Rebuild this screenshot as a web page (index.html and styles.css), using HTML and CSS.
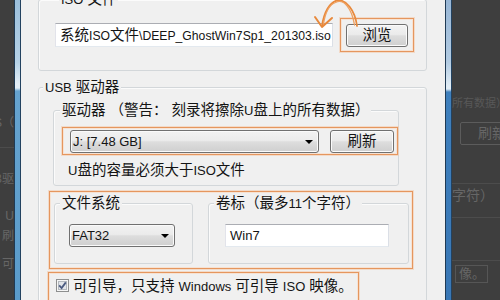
FILE: index.html
```html
<!DOCTYPE html>
<html>
<head>
<meta charset="utf-8">
<link rel="stylesheet" href="styles.css">
</head>
<body>
<div class="screen">
  <div class="ghost ghost-left">
    <div class="g-text gl1">S（</div>
    <div class="g-rule gl2"></div>
    <div class="g-text gl3">B驱</div>
    <div class="g-text gl4">U</div>
    <div class="g-text gl5">刷</div>
    <div class="g-text gl6">可</div>
  </div>
  <div class="frame frame-left"></div>
  <div class="content">
    <div class="group group-iso">
      <div class="group-title"><span class="lat">ISO</span> 文件</div>
      <div class="iso-row">
        <div class="textbox iso-path">系统<span class="lat">ISO</span>文件<span class="lat">\DEEP_GhostWin7Sp1_201303.iso</span></div>
        <div class="mark mark-browse"><div class="btn btn-browse">浏览</div></div>
      </div>
    </div>

    <div class="group group-usb">
      <div class="group-title"><span class="lat">USB</span> 驱动器</div>
      <div class="group group-drive">
        <div class="group-title">驱动器 （警告： 刻录将擦除<span class="lat">U</span>盘上的所有数据）</div>
        <div class="mark mark-drive">
          <div class="combo combo-drive"><span class="lat">J: [7.48 GB]</span><span class="caret"></span></div>
          <div class="btn btn-refresh">刷新</div>
        </div>
        <div class="note"><span class="lat">U</span>盘的容量必须大于<span class="lat">ISO</span>文件</div>
      </div>

      <div class="mark mark-fs">
        <div class="group group-fs">
          <div class="group-title">文件系统</div>
          <div class="combo combo-fs"><span class="lat">FAT32</span><span class="caret"></span></div>
        </div>
        <div class="group group-label">
          <div class="group-title">卷标（最多<span class="lat">11</span>个字符）</div>
          <div class="textbox label-box"><span class="lat">Win7</span></div>
        </div>
      </div>

      <div class="mark mark-check">
        <svg class="checkbox" width="13" height="13" viewBox="0 0 13 13">
          <rect x="0.5" y="0.5" width="12" height="12" fill="#f6f6f6" stroke="#8e8f8f"/>
          <rect x="2.5" y="2.5" width="8" height="8" fill="#e2e5ea" stroke="#b3b8be"/>
          <path d="M3.2 6.4 L5.6 9 L9.8 3.4" fill="none" stroke="#4a5a80" stroke-width="1.8"/>
        </svg>
        <span class="check-text">可引导，只支持 <span class="lat">Windows</span> 可引导 <span class="lat">ISO</span> 映像。</span>
      </div>
    </div>

    <svg class="arrow" width="70" height="36" viewBox="0 0 70 36">
      <path d="M57 26 C 55 10, 46 -1, 37 0.5 C 30 2, 24 12, 22 26" fill="none" stroke="#e8893c" stroke-width="1.8" stroke-linecap="round"/>
      <path d="M54.5 25 C 52 9, 44 -2, 35.5 2.5 C 29 5, 25 14, 23.5 24" fill="none" stroke="#eea060" stroke-width="1.3" stroke-linecap="round"/>
      <path d="M15 17 L 22 27 L 32 18" fill="none" stroke="#e8893c" stroke-width="2" stroke-linecap="round" stroke-linejoin="round"/>
    </svg>
  </div>
  <div class="frame frame-right"></div>
  <div class="ghost ghost-right">
    <div class="g-text gr1">所有数据）</div>
    <div class="g-btn gr2">刷新</div>
    <div class="g-rule gr3"></div>
    <div class="g-text gr4">字符）</div>
    <div class="g-rule gr5"></div>
    <div class="g-rule gr6"></div>
    <div class="g-box gr7">像。</div>
  </div>
</div>
</body>
</html>
```

FILE: styles.css
```css
html, body {
  margin: 0;
  padding: 0;
}

body {
  width: 500px;
  height: 300px;
  overflow: hidden;
  background: #3e3e3e;
  font-family: "Liberation Sans", "Noto Sans CJK SC", sans-serif;
  font-size: 14.5px;
  color: #141414;
}

.lat {
  font-family: "Liberation Sans", sans-serif;
  font-size: 13px;
}

.screen {
  display: flex;
  height: 300px;
}

/* dark background strips */
.ghost {
  background: #3e3e3e;
  overflow: hidden;
  display: flex;
  flex-direction: column;
  color: #666666;
  font-size: 12px;
}

.ghost-left {
  width: 14px;
  align-items: flex-end;
}

.ghost-right {
  width: 48px;
  align-items: flex-start;
}

.g-text {
  white-space: nowrap;
  line-height: 14px;
}

.g-rule {
  height: 1px;
  width: 100%;
  background: #4c4c4c;
  flex: none;
}

.gl1 { margin-top: 116px; }
.gl2 { margin-top: 17px; }
.gl3 { margin-top: 24px; }
.gl4 { margin-top: 23px; }
.gl5 { margin-top: 6px; }
.gl6 { margin-top: 14px; }

.gr1 { margin-top: 96px; font-size: 11px; color: #585858; }
.g-btn {
  margin-top: 12px;
  margin-left: 8px;
  width: 48px;
  height: 23px;
  border: 1px solid #5c5c5c;
  border-radius: 2px;
  box-sizing: border-box;
  padding-left: 17px;
  line-height: 21px;
  font-size: 14px;
  white-space: nowrap;
  flex: none;
}
.gr3 { margin-top: 38px; }
.gr4 { margin-top: 2px; font-size: 14px; line-height: 18px; }
.gr5 { margin-top: 13px; }
.gr6 { margin-top: 42px; }
.g-box {
  margin-top: 4px;
  margin-left: 3px;
  width: 33px;
  height: 18px;
  border: 1px solid #565656;
  box-sizing: border-box;
  font-size: 13px;
  line-height: 16px;
  padding-left: 3px;
  white-space: nowrap;
  flex: none;
}

/* window frames */
.frame {
  width: 5px;
  border-left: 1px solid #1f3a54;
  border-right: 1px solid #234260;
}

.frame-left {
  background: linear-gradient(to bottom, #9bbfdb 0, #b6d2e7 62px, #e4eff7 84px, #e4eff7 88px, #66a3cf 91px, #5a9bca 300px);
}

.frame-right {
  background: linear-gradient(to bottom, #98b6d5 0, #b2cbe2 62px, #e0ecf5 86px, #e0ecf5 89px, #3f80bd 92px, #3977b5 300px);
}

/* main dialog area */
.content {
  flex: 1;
  position: relative;
  background: #f0f0f0;
  padding: 0 18px 0 17px;
}

.group {
  border: 1px solid #d3d7da;
  border-radius: 3px;
  box-shadow: inset 1px 1px 0 #fbfbfb;
}

.group-title {
  margin: -9px 0 0 4px;
  padding: 0 2px;
  height: 16px;
  line-height: 16px;
  width: fit-content;
  background: #f0f0f0;
  white-space: nowrap;
}

.group-iso {
  margin-top: -1px;
  padding: 0 0 18px 16px;
}

.iso-row {
  margin-top: 11px;
  display: flex;
  align-items: center;
  gap: 7px;
  height: 34px;
}

.textbox {
  box-sizing: border-box;
  height: 24px;
  background: #ffffff;
  border: 1px solid;
  border-color: #abadb3 #dbdfe6 #e3e9ef #e2e3ea;
  padding-left: 4px;
  line-height: 22px;
  white-space: nowrap;
  overflow: hidden;
}

.iso-path {
  width: 278px;
}

.iso-path .lat {
  font-size: 12.2px;
}

/* orange highlight boxes */
.mark {
  box-sizing: border-box;
  border: 1px solid #e5965e;
  box-shadow: 0 0 0 1px rgba(244, 200, 168, 0.55), inset 0 0 0 1px rgba(248, 222, 204, 0.8);
}

.mark-browse {
  width: 74px;
  height: 34px;
  display: flex;
  align-items: center;
  justify-content: center;
  padding-top: 1px;
}

.btn {
  box-sizing: border-box;
  height: 23px;
  border: 1px solid #707070;
  border-radius: 3px;
  background: linear-gradient(to bottom, #f3f3f3 0%, #ebebeb 45%, #dddddd 52%, #cfcfcf 100%);
  box-shadow: inset 0 0 0 1px #fbfbfb;
  text-align: center;
  line-height: 21px;
  white-space: nowrap;
}

.btn-browse {
  width: 62px;
}

.group-usb {
  margin-top: 16px;
  height: 260px;
}

.group-drive {
  margin: 15px 0 0 14px;
  width: 346px;
  box-sizing: border-box;
  padding-bottom: 7px;
}

.group-drive .group-title {
  margin-left: 6px;
}

.mark-drive {
  margin: 9px 0 0 8px;
  width: 336px;
  height: 28px;
  display: flex;
  align-items: center;
  padding-left: 7px;
  gap: 11px;
}

.combo {
  box-sizing: border-box;
  height: 23px;
  border: 1px solid #707070;
  border-radius: 3px;
  background: linear-gradient(to bottom, #f2f2f2 0%, #ebebeb 45%, #dddddd 52%, #cfcfcf 100%);
  box-shadow: inset 0 0 0 1px #fafafa;
  display: flex;
  align-items: center;
  justify-content: space-between;
  padding: 0 5px 0 2px;
  line-height: 21px;
  white-space: nowrap;
}

.caret {
  width: 0;
  height: 0;
  border-left: 4px solid transparent;
  border-right: 4px solid transparent;
  border-top: 4px solid #000000;
  margin-top: 1px;
}

.combo-drive {
  width: 249px;
}

.btn-refresh {
  width: 64px;
}

.note {
  margin: 7px 0 0 14px;
  line-height: 16px;
  height: 16px;
  white-space: nowrap;
}

.mark-fs {
  margin: 5px 0 0 10px;
  width: 364px;
  display: flex;
  gap: 15px;
  padding: 11px 3px 4px 4px;
}

.group-fs {
  width: 139px;
  box-sizing: border-box;
  padding-bottom: 16px;
}

.group-fs .group-title {
  margin-left: 5px;
}

.combo-fs {
  margin: 13px 0 0 14px;
  width: 106px;
}

.group-label {
  width: 201px;
  box-sizing: border-box;
  padding-bottom: 16px;
}

.group-label .group-title {
  margin-left: 5px;
}

.label-box {
  margin: 13px 0 0 16px;
  width: 164px;
  height: 23px;
  line-height: 21px;
}

.mark-check {
  margin: 3px 0 0 9px;
  width: 311px;
  height: 32px;
  display: flex;
  align-items: flex-start;
  padding: 5px 0 0 7px;
  gap: 4px;
}

.checkbox {
  flex: none;
  margin-top: 1px;
}

.check-text {
  line-height: 16px;
  white-space: nowrap;
}

.arrow {
  position: absolute;
  left: 279px;
  top: 0;
}
```
